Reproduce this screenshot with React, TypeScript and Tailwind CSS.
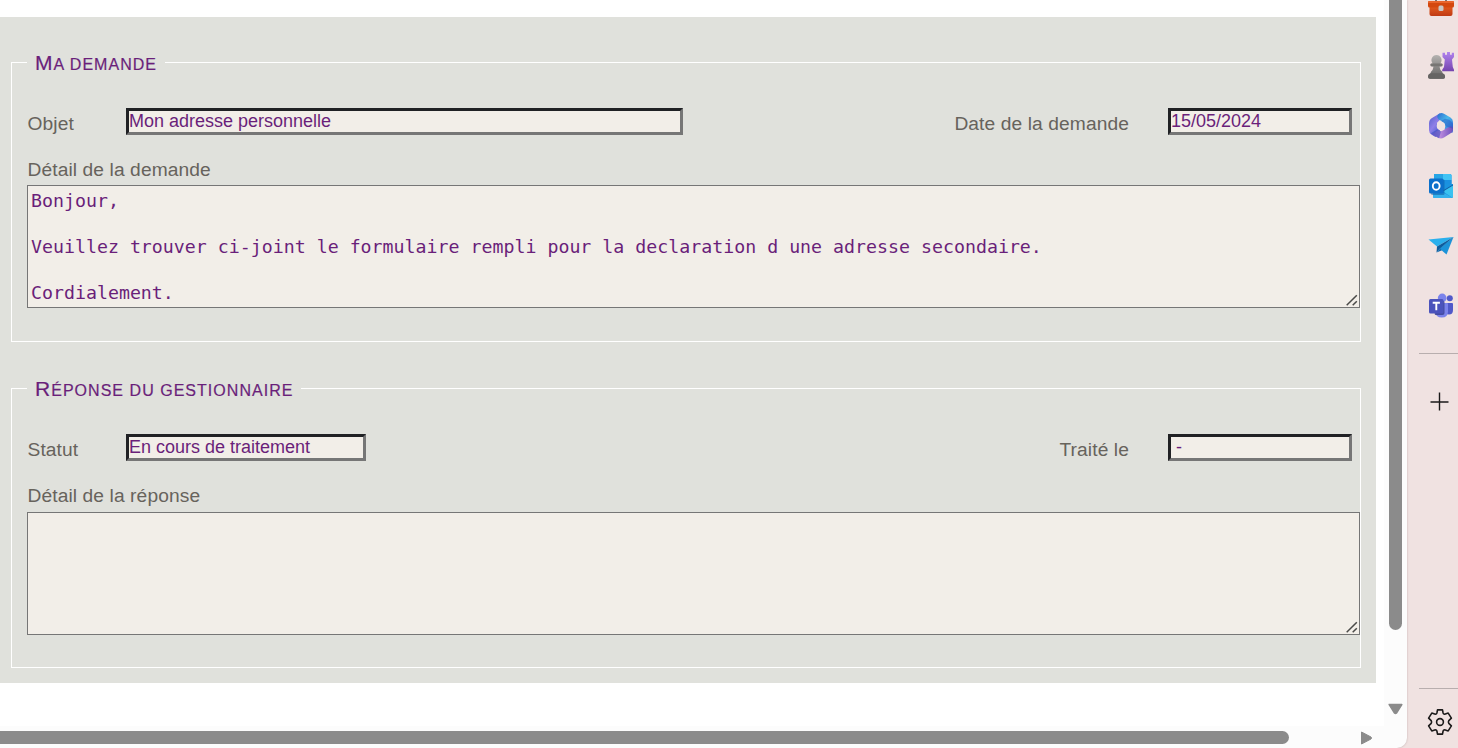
import type { ReactNode } from 'react';

const control =
  'block border-[3px] border-t-[#202124] border-l-[#202124] border-r-[#767676] border-b-[#767676] bg-[#f2eee8] text-[18px] leading-[20px] tracking-normal h-[27px] text-[#6a1f7a] outline-none rounded-none';

function Field({ label, value, width, className = '' }: { label: string; value: string; width: string; className?: string }) {
  return (
    <label className={`flex items-start ${className}`}>
      <span className="pt-[5px] leading-[22px]">{label}</span>
      <input readOnly value={value} className={`${control} ${width}`} />
    </label>
  );
}

function Grip() {
  return (
    <svg className="absolute right-[2px] bottom-[2px]" width="12" height="12" viewBox="0 0 12 12" fill="none" stroke="#4a4a48" strokeWidth="1.5">
      <path d="M0.7 11.3 10.8 1.2M6.7 11.3 10.8 7.2" />
    </svg>
  );
}

function Detail({ label, value = '', className = '' }: { label: string; value?: string; className?: string }) {
  return (
    <label className="mt-[23px] block">
      <span className="block pt-px pl-[0.5px] leading-[22px]">{label}</span>
      <span className={`relative block w-[1333px] ${className}`}>
        <textarea
          readOnly
          value={value}
          className="block h-[123px] w-full resize-none overflow-hidden rounded-none border border-[#767676] bg-[#f2eee8] px-[3px] py-[3px] font-['DejaVu_Sans_Mono',monospace] text-[18.26px] leading-[23px] tracking-normal text-[#6a1f7a] outline-none"
        />
        <Grip />
      </span>
    </label>
  );
}

function Group({ title, children }: { title: string; children: ReactNode }) {
  return (
    <fieldset className="h-[291px] w-[1350px] border border-white pl-[15px]">
      <legend className="h-[23px] px-2 text-[#6a1f7a]">
        <span className="block text-[16px] leading-[23px] tracking-[1.03px] uppercase [-webkit-text-stroke:0.2px_#6a1f7a] first-letter:text-[21px]">
          {title}
        </span>
      </legend>
      {children}
    </fieldset>
  );
}

function Briefcase() {
  return (
    <svg width="28" height="28" viewBox="0 0 28 28">
      <defs>
        <linearGradient id="case" x2="0" y2="1">
          <stop stopColor="#e8601f" />
          <stop offset="1" stopColor="#bf3a14" />
        </linearGradient>
      </defs>
      <path d="M9 13V9q0-2 2-2h6q2 0 2 2v4" fill="none" stroke="#77706e" strokeWidth="2" />
      <rect x="2.5" y="17" width="23" height="11" rx="2" fill="url(#case)" />
      <rect x="1" y="13" width="26" height="6.5" rx="1.5" fill="#d4480f" />
      <rect x="1" y="13" width="26" height="2" rx="1" fill="#e8652c" />
      <rect x="11.5" y="17.4" width="5" height="5.5" rx="1.5" fill="#c9c6c4" />
    </svg>
  );
}

function Chess() {
  return (
    <svg width="28" height="28" viewBox="0 0 28 28">
      <defs>
        <linearGradient id="rook" x2="0" y2="1">
          <stop stopColor="#b184ee" />
          <stop offset="1" stopColor="#7444ae" />
        </linearGradient>
        <linearGradient id="pawn" x2="0" y2="1">
          <stop stopColor="#b5b3b1" />
          <stop offset="1" stopColor="#62605f" />
        </linearGradient>
      </defs>
      <path d="M15.500.8h2.500v2h2V0h3v2.800h1.800v-2h2.200V5l-2 2.500.8 7.500 1.200 2.800v1.500H15.200v-1.500l1.800-2.800.8-7.500L15.500 5Z" fill="url(#rook)" />
      <path d="M9.500 3a5 5 0 0 1 3.700 8.400H14q1.600 0 1.600 1.500T14 14.400h-1.500q.5 3.600 2.300 4.800.8.800.8 2.100 2.500.6 2.500 3.400 0 2-2 2h-13q-2 0-2-2 0-2.800 2.500-3.400 0-1.300.8-2.100Q6 18 6.500 14.400H5q-1.600 0-1.600-1.500T5 11.400h.8A5 5 0 0 1 9.500 3Z" fill="url(#pawn)" />
      <rect x="3.400" y="11.400" width="12.200" height="2.800" rx="1.400" fill="#787674" />
      <path d="M4 21.200h11q3 .5 3 3.500 0 2-2 2H3q-2 0-2-2 0-3 3-3.500Z" fill="#666463" />
    </svg>
  );
}

function Office() {
  return (
    <svg width="26" height="28" viewBox="0 0 26 28">
      <defs>
        <linearGradient id="oa" x1="0.2" x2="0.8" y2="1">
          <stop stopColor="#5961cc" />
          <stop offset=".5" stopColor="#8f7fe8" />
          <stop offset="1" stopColor="#4258cb" />
        </linearGradient>
        <linearGradient id="ob" x2="1" y2="1">
          <stop stopColor="#2c69cf" />
          <stop offset=".45" stopColor="#49b8ea" />
          <stop offset="1" stopColor="#2d62d6" />
        </linearGradient>
        <linearGradient id="oc" x1="1" x2="0">
          <stop stopColor="#6c50bd" />
          <stop offset=".6" stopColor="#b887dc" />
          <stop offset="1" stopColor="#8660ca" />
        </linearGradient>
      </defs>
      <path d="M12 1.200 4 6Q1 7.800 1 11.500v6.800q0 3 2.700 4.500l3.800 2.200 4.500-6.500-3-2.700v-5l3-3Z" fill="url(#oa)" />
      <path d="M11 1.700q2.500-1.400 5 0l6.500 3.800Q25 7 25 10v8q0 1.700-.8 3L16.500 16.500v-5L13.500 9l-3-1.500q-2.800-3.700.5-5.800Z" fill="url(#ob)" />
      <path d="M25 16q.3 3.500-2.700 5.500l-6.300 4.100q-3 1.800-6 .2l-6-3.500L10 18.200q2 2 5 .3l2.500-1.800 5-2.500Q24.500 13.800 25 16Z" fill="url(#oc)" />
      <path d="M2.500 21.500 9 17.500l4 2-2 6.700Z" fill="#3b4fc0" opacity=".55" />
      <path d="m13 9 4-2.200q5 .2 8 5v5L16.800 14v-2.500Z" fill="#2048bd" opacity=".4" />
      <circle cx="13" cy="14" r="4.300" fill="#f0e2e1" />
    </svg>
  );
}

function Outlook() {
  return (
    <svg width="26" height="26" viewBox="0 0 26 26">
      <path d="M6 2q0-1 1-1h15q1.500 0 1.500 1.500V13H6Z" fill="#1490df" />
      <path d="M6 1h9v6H6Z" fill="#28a5e5" />
      <path d="M15 1h7q1.500 0 1.500 1.500V7H15Z" fill="#42c4f5" />
      <path d="M15 7h8.500v6.500H15Z" fill="#1a91e0" />
      <path d="M5 11h20v12.500q0 1.500-1.500 1.500h-17Q5 25 5 23.500Z" fill="#1a93df" />
      <path d="M25 11.500v5L15 19v-1.500Z" fill="#145a9e" />
      <path d="M25 12.500v11q0 .8-.6 1.200L15 18.500Z" fill="#3ac2f0" />
      <path d="M5 20h11l8.400 4.700q-.4.300-.9.300h-17Q5 25 5 23.500Z" fill="#34b1ec" />
      <rect x="3" y="6.500" width="13.500" height="15.500" rx="1.300" fill="#0a549b" opacity=".5" />
      <rect x="1" y="5.500" width="14.500" height="15" rx="1.500" fill="#0b70cb" />
      <ellipse cx="8.200" cy="13" rx="3.400" ry="3.800" fill="none" stroke="#fff" strokeWidth="1.900" />
    </svg>
  );
}

function Plane() {
  return (
    <svg width="26" height="20" viewBox="0 0 26 20">
      <path d="M.5 3.500 25.500 1 9 10.500Z" fill="#2bb0ed" />
      <path d="M25.500 1 18.500 18.500 11.500 12.500Z" fill="#1c93d8" />
      <path d="M25.500 1 9 10.500 8.500 16.500 12 12.500Z" fill="#0d5c9d" />
      <path d="M8.500 16.500 12 12.500 14 14.200Z" fill="#0a6ab0" />
    </svg>
  );
}

function Teams() {
  return (
    <svg width="26" height="26" viewBox="0 0 26 26">
      <circle cx="21.800" cy="5.300" r="3" fill="#5059c9" />
      <circle cx="14.200" cy="5" r="4.400" fill="#7b83eb" />
      <path d="M17 10h7q1 0 1 1v6q0 4.500-4 4.500t-4-4Z" fill="#5059c9" />
      <path d="M8 10h11q1 0 1 1v7.500q0 6-6.200 6T7 18.500Z" fill="#7b83eb" />
      <path d="M4 8h11q1.500 0 1.500 1.500V20q0 2-2 2H7Z" fill="#37408f" opacity=".8" />
      <rect x="1" y="6" width="14.500" height="14.500" rx="1.500" fill="#4b53bc" />
      <path d="M4.700 9.700h7.200M8.300 9.700v7.600" stroke="#fff" strokeWidth="1.900" />
    </svg>
  );
}

function Gear() {
  return (
    <svg width="26" height="26" viewBox="0 0 26 26" fill="none" stroke="#1b1a1a" strokeWidth="1.600" strokeLinejoin="round">
      <path d="M10.500.9h5l.6 3.100q.3 1.200 1.500 1.200l3.600-1.100 3.200 5-2.600 2.500q-.8 1.400 0 2.800l2.600 2.500-3.200 5-3.600-1.100q-1.200 0-1.500 1.200l-.6 3.100h-5L9.900 22q-.3-1.200-1.500-1.200l-3.600 1.100-3.200-5 2.600-2.500q.8-1.400 0-2.800L1.600 9.100l3.200-5 3.600 1.100Q9.600 5.200 9.900 4Z" />
      <circle cx="13" cy="13" r="3.400" />
    </svg>
  );
}

export default function App() {
  return (
    <div className="flex h-[748px] w-[1458px] overflow-hidden bg-[#f0e2e1] font-['Liberation_Sans',Arial,sans-serif] text-[19.2px] tracking-[0.1px] text-[#67635c]">
      <div className="flex h-[748px] w-[1407px] shrink-0 flex-col overflow-hidden rounded-br-[10px] bg-[#fcfcfc] shadow-[0_0_2px_#b9a9a8]">
        <div className="flex h-[726px]">
          <main className="h-full w-[1384px] bg-white pt-[17px]">
            <form className="flex h-[666px] w-[1376px] flex-col gap-[35px] bg-[#e0e1dc] pt-[34px] pl-[11px]">
              <Group title="Ma demande">
                <div className="flex justify-between pt-[34px] pr-[8px] pl-[0.5px]">
                  <Field label="Objet" value="Mon adresse personnelle" width="w-[557px]" className="w-[655.5px] justify-between" />
                  <Field label="Date de la demande" value="15/05/2024" width="w-[184px]" className="gap-[39px]" />
                </div>
                <Detail
                  label="Détail de la demande"
                  className="mt-[4px]"
                  value={'Bonjour,\n\nVeuillez trouver ci-joint le formulaire rempli pour la declaration d une adresse secondaire.\n\nCordialement.'}
                />
              </Group>
              <Group title="Réponse du gestionnaire">
                <div className="flex justify-between pt-[34px] pr-[8px] pl-[0.5px]">
                  <Field label="Statut" value="En cours de traitement" width="w-[240px]" className="w-[338.5px] justify-between" />
                  <Field label="Traité le" value={'\u00a0-'} width="w-[184px]" className="gap-[39px]" />
                </div>
                <Detail label="Détail de la réponse" className="mt-[5px]" />
              </Group>
            </form>
          </main>
          <div className="flex w-[23px] flex-col pl-[5px]">
            <div className="h-[630px] w-[13px] rounded-b-full bg-[#8b8b8b]" />
            <svg className="mt-[73px] -ml-px" width="15" height="12" viewBox="0 0 15 12">
              <path d="M1.200 1.500h12.600L8.500 10q-1 1-2 0Z" fill="#8b8b8b" stroke="#8b8b8b" strokeWidth="1.500" strokeLinejoin="round" />
            </svg>
          </div>
        </div>
        <div className="flex items-start pt-[5px]">
          <div className="h-[13px] w-[1289px] rounded-r-full bg-[#8b8b8b]" />
          <svg className="ml-[71px]" width="13" height="15" viewBox="0 0 13 15">
            <path d="M1.500 1v12L11 8q1-1 0-2Z" fill="#8b8b8b" stroke="#8b8b8b" strokeWidth="1" strokeLinejoin="round" />
          </svg>
        </div>
      </div>
      <aside className="flex h-[748px] w-[51px] shrink-0 flex-col pl-[12px]">
        <div className="-mt-[12px] flex flex-col items-center pl-[4px]">
          <div className="flex h-[60px] items-start"><Briefcase /></div>
          <div className="flex h-[60px] items-start pt-[4px]"><Chess /></div>
          <div className="flex h-[60px] items-start pt-[4px]"><Office /></div>
          <div className="flex h-[60px] items-start pt-[5px]"><Outlook /></div>
          <div className="flex h-[60px] items-start pt-[8px]"><Plane /></div>
          <div className="flex h-[65px] items-start pt-[5px]"><Teams /></div>
        </div>
        <div className="h-px shrink-0 bg-[#b8aeae]" />
        <svg className="mt-[38px] ml-[11px] shrink-0" width="19" height="19" viewBox="0 0 19 19" stroke="#1b1a1a" strokeWidth="1.400">
          <path d="M.5 10h18M9.500.5v18" />
        </svg>
        <div className="mt-[277px] h-px shrink-0 bg-[#b8aeae]" />
        <div className="mt-[20px] ml-[8px]"><Gear /></div>
      </aside>
    </div>
  );
}
